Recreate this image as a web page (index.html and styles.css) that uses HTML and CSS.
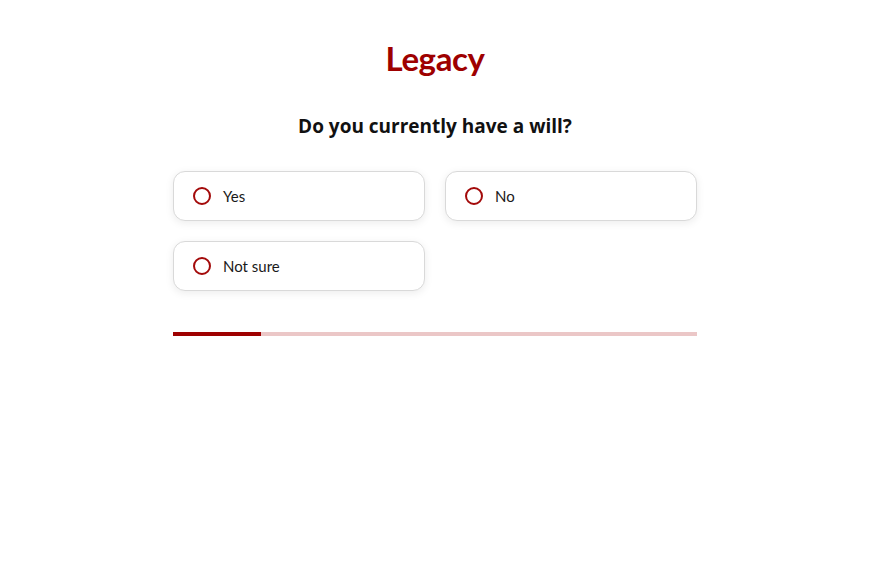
FILE: index.html
```html
<!DOCTYPE html>
<html lang="en">
<head>
<meta charset="utf-8">
<title>Legacy</title>
<link rel="stylesheet" href="styles.css">
</head>
<body>
<main class="page">
  <h1 class="logo">Legacy</h1>
  <h2 class="question">Do you currently have a will?</h2>
  <div class="options">
    <label class="option"><span class="radio"></span><span class="label">Yes</span></label>
    <label class="option"><span class="radio"></span><span class="label">No</span></label>
    <label class="option"><span class="radio"></span><span class="label">Not sure</span></label>
  </div>
  <div class="progress"><div class="progress-fill" style="width:16.7%"></div></div>
</main>
</body>
</html>
```
FILE: styles.css
```css
html, body {
  margin: 0;
  padding: 0;
  background: #ffffff;
}
body {
  font-family: "Open Sans", "Liberation Sans", sans-serif;
  color: #111;
}
.page {
  width: 524px;
  margin: 0 auto;
  padding-top: 38px;
  display: flex;
  flex-direction: column;
  align-items: stretch;
}
.logo {
  margin: 0;
  text-align: center;
  font-family: "Lato", sans-serif;
  font-weight: 700;
  font-size: 33px;
  line-height: 40px;
  color: #9e0000;
  letter-spacing: -0.4px;
}
.question {
  margin: 34px 0 0;
  text-align: center;
  font-family: "Open Sans", sans-serif;
  font-weight: 700;
  font-size: 19px;
  line-height: 28px;
  color: #111;
}
.options {
  margin-top: 31px;
  display: grid;
  grid-template-columns: 1fr 1fr;
  gap: 20px;
}
.option {
  height: 50px;
  box-sizing: border-box;
  border: 1px solid #d9d9d9;
  border-radius: 12px;
  background: #fff;
  box-shadow: 0 2px 8px rgba(0, 0, 0, 0.08);
  display: flex;
  align-items: center;
  padding-left: 19px;
  gap: 12px;
}
.radio {
  width: 18px;
  height: 18px;
  box-sizing: border-box;
  border: 2px solid #a30a0a;
  border-radius: 50%;
  flex: none;
}
.label {
  font-family: "Lato", sans-serif;
  font-size: 15px;
  color: #1a1a1a;
}
.progress {
  margin-top: 41px;
  height: 4px;
  background: #ebc7c7;
}
.progress-fill {
  height: 100%;
  background: #9e0000;
}
```
